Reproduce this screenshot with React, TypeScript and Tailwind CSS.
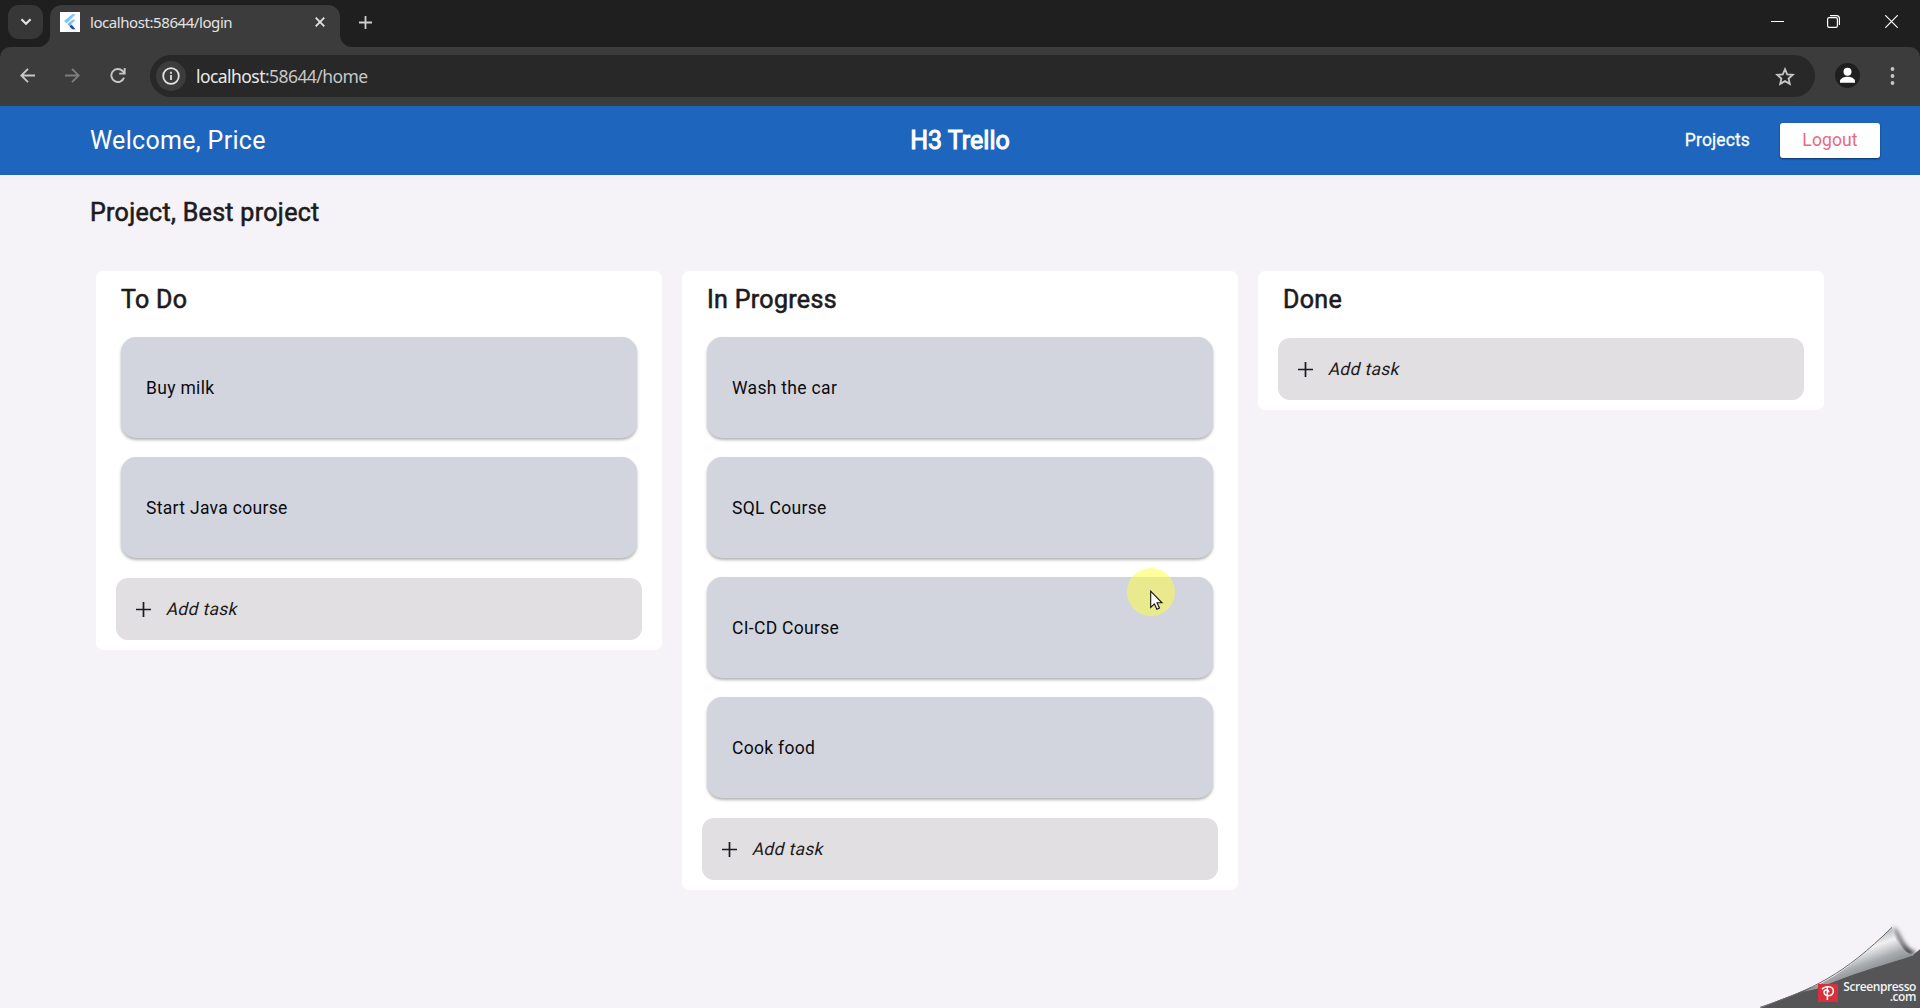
import React from "react";

const columns = [
  { title: "To Do", width: "w-[566px]", tasks: ["Buy milk", "Start Java course"] },
  { title: "In Progress", width: "w-[556px]", tasks: ["Wash the car", "SQL Course", "CI-CD Course", "Cook food"] },
  { title: "Done", width: "w-[566px]", tasks: [] as string[] },
];

function TabStrip() {
  return (
    <div className="flex h-[47px] bg-[#1f1f1f]">
      <div className="ml-2 mt-[5px] flex h-[34px] w-[35px] items-center justify-center rounded-[11px] bg-[#373737]">
        <svg width="12" height="8" viewBox="0 0 12 8" fill="none" stroke="#e3e3e3" strokeWidth="2.1">
          <path d="M1.4 1.2 6 5.8l4.6-4.6" />
        </svg>
      </div>
      <div className="relative ml-[7px] mt-[5px] flex h-[42px] w-[290px] rounded-t-[12px] bg-[#3c3c3c]">
        <svg className="absolute -left-3 bottom-0" width="12" height="12"><path d="M12 0v12H0A12 12 0 0 0 12 0Z" fill="#3c3c3c" /></svg>
        <svg className="absolute -right-3 bottom-0" width="12" height="12"><path d="M0 0v12h12A12 12 0 0 1 0 0Z" fill="#3c3c3c" /></svg>
        <div className="ml-[10px] mt-[7px] h-5 w-5 bg-white">
          <svg width="20" height="20" viewBox="0 0 20 20">
            <path d="M12.3 2.3h3.4L6.7 11.2 4 9.1Z" fill="#7cc4fb" />
            <path d="M12.3 7.8h3.4L10.9 12.6l-3.4-.3Z" fill="#7cc4fb" />
            <path d="m7.5 12.5 2-2 4.2 4.2-2 1.2Z" fill="#6fb4f5" />
            <path d="m9.6 14.6 2-1.6 4 4.3h-3.4Z" fill="#164a9a" />
          </svg>
        </div>
        <span className="ml-[10px] mt-[6px] text-[15px] leading-[22px] tracking-[-0.43px] text-[#e3e3e3]">localhost:58644/login</span>
        <svg className="absolute left-[265px] top-[12px]" width="10" height="10" stroke="#e3e3e3" strokeWidth="1.8"><path d="m.7.7 8.6 8.6M9.3.7.7 9.3" /></svg>
      </div>
      <svg className="ml-[19px] mt-4" width="13" height="13" stroke="#d0d0d0" strokeWidth="1.8"><path d="M6.5 0v13M0 6.5h13" /></svg>
      <div className="ml-auto mr-[22px] mt-[15px] flex h-[13px]">
        <svg width="13" height="13" stroke="#fff" strokeWidth="1"><path d="M0 6.5h13" /></svg>
        <svg className="ml-[43px]" width="13" height="13" fill="none" stroke="#fff" strokeWidth="1.2">
          <rect x=".6" y="2.6" width="9.8" height="9.8" rx="1.6" />
          <path d="M3 .6h6.5a2.9 2.9 0 0 1 2.9 2.9V10" />
        </svg>
        <svg className="ml-[45px]" width="13" height="13" stroke="#fff" strokeWidth="1.2"><path d="m.3.3 12.4 12.4M12.7.3.3 12.7" /></svg>
      </div>
    </div>
  );
}

function Toolbar() {
  return (
    <div className="bg-[#1f1f1f]">
      <div className="flex h-[59px] items-start rounded-t-[10px] bg-[#3c3c3c] pt-2">
        <svg className="ml-5 mt-[13px]" width="15" height="15" fill="none" stroke="#c7c7c7" strokeWidth="1.9"><path d="M15 7.5H1.5M8 .8 1.3 7.5 8 14.2" /></svg>
        <svg className="ml-[30px] mt-[13px]" width="15" height="15" fill="none" stroke="#7d7d7d" strokeWidth="1.9"><path d="M0 7.5h13.5M7 .8l6.7 6.7L7 14.2" /></svg>
        <svg className="ml-[30px] mt-[13px]" width="16" height="15" fill="none" stroke="#c7c7c7" strokeWidth="1.9"><path d="M14 9.6A6.5 6.5 0 1 1 12.6 3L15 5.2M14.7 0v5.6H9.2" /></svg>
        <div className="ml-6 flex h-[42px] w-[1665px] rounded-full bg-[#282828]">
          <div className="ml-[6px] mt-[6px] flex h-[30px] w-[30px] items-center justify-center rounded-full bg-[#3c3c3c]">
            <svg width="18" height="18" fill="none" stroke="#e3e3e3" strokeWidth="1.8"><circle cx="9" cy="9" r="7.8" /><path d="M9 8v5M9 4.8v2" /></svg>
          </div>
          <span className="ml-[10px] mt-2 text-[17.5px] leading-[26px] tracking-[-0.56px] text-[#c7c7c7]"><span className="text-[#e9e9e9]">localhost</span>:58644/home</span>
          <svg className="ml-auto mr-5 mt-3" width="20" height="19" viewBox="0 0 20 19" fill="none" stroke="#c7c7c7" strokeWidth="1.8"><path d="m10 2.2 2.2 5.1 5.6.5-4.2 3.7 1.2 5.4-4.8-2.8-4.8 2.8 1.2-5.4-4.2-3.7 5.6-.5Z" /></svg>
        </div>
        <svg className="ml-5 mt-2" width="25" height="25"><circle cx="12.5" cy="12.5" r="12.5" fill="#1f1f1f" /><circle cx="12.5" cy="8.8" r="4" fill="#fff" /><path d="M5 19.8v-1.6c0-3 4.6-4.4 7.5-4.4s7.5 1.4 7.5 4.4v1.6Z" fill="#fff" /></svg>
        <svg className="ml-[30px] mt-3" width="5" height="18" fill="#c7c7c7"><circle cx="2.5" cy="2" r="1.9" /><circle cx="2.5" cy="9" r="1.9" /><circle cx="2.5" cy="16" r="1.9" /></svg>
      </div>
    </div>
  );
}

function AddTask() {
  return (
    <button className="mt-px flex h-[62px] w-full items-center rounded-[12px] bg-[#e1dfe2] pl-5 text-[17.5px] tracking-[0.3125px] text-[#1d1b20]">
      <svg className="mr-[16px]" width="15" height="15" stroke="#1d1b20" strokeWidth="1.7"><path d="M7.5 0v15M0 7.5h15" /></svg>
      <span className="inline-block -skew-x-[13deg]">Add task</span>
    </button>
  );
}

function Column({ title, width, tasks }: { title: string; width: string; tasks: string[] }) {
  return (
    <section className={`${width} flex flex-col rounded-[7px] bg-white px-5 pb-[10px]`}>
      <h2 className="h-[66px] pl-[5px] pt-[11px] text-[25px] leading-[35px] tracking-[0.3125px] text-[#1d1b20] [-webkit-text-stroke:0.6px]">{title}</h2>
      {tasks.map((task) => (
        <div key={task} className="mx-[5px] mb-[19px] flex h-[101px] items-center rounded-[15px] bg-[#d2d5de] pl-[25px] pt-px text-[17.5px] tracking-[0.3125px] text-[#0b0b10] shadow-[0_2px_3px_rgba(0,0,0,0.3)]">
          {task}
        </div>
      ))}
      <AddTask />
    </section>
  );
}

function PageCurl() {
  return (
    <div className="absolute bottom-0 right-0 h-[108px] w-[180px] overflow-hidden">
      <svg width="180" height="108" viewBox="0 0 540 324">
        <defs>
          <linearGradient id="fold" x1="380" y1="120" x2="415" y2="215" gradientUnits="userSpaceOnUse">
            <stop offset="0" stopColor="#c4c5c7" />
            <stop offset=".25" stopColor="#f1f1f2" />
            <stop offset=".65" stopColor="#a9acaf" />
            <stop offset="1" stopColor="#85898c" />
          </linearGradient>
          <filter id="soft" x="-20%" y="-20%" width="140%" height="140%"><feGaussianBlur stdDeviation="6" /></filter>
        </defs>
        <path d="M458 80C484 92 480 140 532 158L500 170Z" fill="#3d3d3f" filter="url(#soft)" />
        <path d="M60 324C120 298 190 272 260 245L518 166 540 148V324Z" fill="#555557" />
        <path d="M190 275C300 232 370 165 456 82 462 122 488 157 522 166 450 190 330 222 240 264Z" fill="url(#fold)" />
        <path d="M60 322C220 268 310 225 456 82" fill="none" stroke="#68696b" strokeWidth="3" />
        <rect x="234" y="252" width="60" height="54" fill="#d9303c" />
        <path d="M246 268c8-10 34-12 34 5 0 18-28 18-28 4 0-9 14-9 14 0M262 262v38" fill="none" stroke="#fff" strokeWidth="4.5" />
      </svg>
      <div className="absolute right-1 top-[82px] flex flex-col items-end font-['Open_Sans',sans-serif] text-[12px] font-semibold tracking-[-0.42px] text-[#f3f3f3]">
        <span className="h-[10px] leading-[10px]">Screenpresso</span>
        <span className="h-[10px] leading-[9px]">.com</span>
      </div>
    </div>
  );
}

function Pointer() {
  return (
    <div className="pointer-events-none absolute left-[1127px] top-[568px] h-[48px] w-[48px] rounded-full bg-[#ffff3c]/50">
      <svg className="absolute left-[23px] top-[22px]" width="13" height="21" viewBox="0 0 13 21">
        <path d="M.7 1.2v16.2l3.7-3.5 2.5 5.4 2.6-1.2-2.5-5.3h5Z" fill="#fff" stroke="#111" strokeWidth="1.1" />
      </svg>
    </div>
  );
}

export default function App() {
  return (
    <div className="relative h-[1008px] w-[1920px] overflow-hidden bg-[#f5f3f7] font-[Roboto,sans-serif]">
      <div className="font-['Noto_Sans',sans-serif]">
        <TabStrip />
        <Toolbar />
      </div>
      <header className="grid h-[69px] grid-cols-3 items-center bg-[#1e65bd] pl-[90px] pr-10 text-white">
        <span className="text-[25px] tracking-[0.3125px]">Welcome, Price</span>
        <h1 className="pl-[25px] pr-[75px] text-center text-[25px] [-webkit-text-stroke:1px]">H3 Trello</h1>
        <nav className="flex items-center justify-end gap-[30px] text-[17.5px] tracking-[0.125px]">
          <span className="[-webkit-text-stroke:0.3px]">Projects</span>
          <button className="h-[35px] w-[100px] rounded-[3px] bg-white text-[#e96a7c] shadow-[0_1px_2px_rgba(0,0,0,0.5)]">Logout</button>
        </nav>
      </header>
      <main>
        <h2 className="ml-[90px] h-24 pt-[21px] text-[25px] leading-[34px] tracking-[0.3125px] text-[#1d1b20] [-webkit-text-stroke:0.6px]">Project, Best project</h2>
        <div className="flex items-start justify-between pl-24 pr-24">
          {columns.map((column) => (
            <Column key={column.title} {...column} />
          ))}
        </div>
      </main>
      <Pointer />
      <PageCurl />
    </div>
  );
}
